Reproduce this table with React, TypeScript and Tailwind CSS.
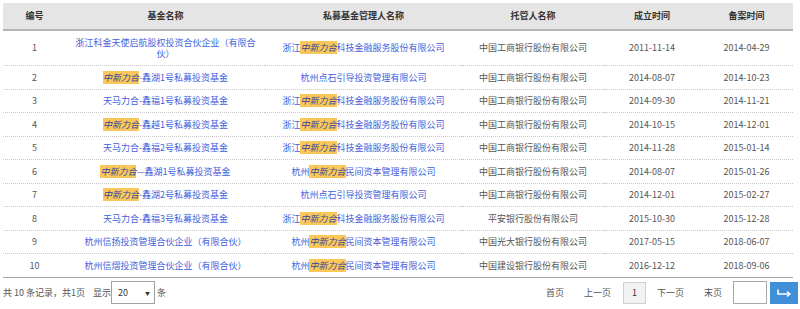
import React from "react";

type Part = string | { hl: string };

type Row = {
  no: number;
  fund: Part[];
  manager: Part[];
  custodian: string;
  founded: string;
  filed: string;
};

const HL = { hl: "中新力合" };

const ROWS: Row[] = [
  { no: 1, fund: ["浙江科金天使启航股权投资合伙企业（有限合伙）"], manager: ["浙江", HL, "科技金融服务股份有限公司"], custodian: "中国工商银行股份有限公司", founded: "2011-11-14", filed: "2014-04-29" },
  { no: 2, fund: [HL, "-鑫湖1号私募投资基金"], manager: ["杭州点石引导投资管理有限公司"], custodian: "中国工商银行股份有限公司", founded: "2014-08-07", filed: "2014-10-23" },
  { no: 3, fund: ["天马力合-鑫福1号私募投资基金"], manager: ["浙江", HL, "科技金融服务股份有限公司"], custodian: "中国工商银行股份有限公司", founded: "2014-09-30", filed: "2014-11-21" },
  { no: 4, fund: [HL, "-鑫越1号私募投资基金"], manager: ["浙江", HL, "科技金融服务股份有限公司"], custodian: "中国工商银行股份有限公司", founded: "2014-10-15", filed: "2014-12-01" },
  { no: 5, fund: ["天马力合-鑫福2号私募投资基金"], manager: ["浙江", HL, "科技金融服务股份有限公司"], custodian: "中国工商银行股份有限公司", founded: "2014-11-28", filed: "2015-01-14" },
  { no: 6, fund: [HL, "—鑫湖1号私募投资基金"], manager: ["杭州", HL, "民间资本管理有限公司"], custodian: "中国工商银行股份有限公司", founded: "2014-08-07", filed: "2015-01-26" },
  { no: 7, fund: [HL, "-鑫湖2号私募投资基金"], manager: ["杭州点石引导投资管理有限公司"], custodian: "中国工商银行股份有限公司", founded: "2014-12-01", filed: "2015-02-27" },
  { no: 8, fund: ["天马力合-鑫福3号私募投资基金"], manager: ["浙江", HL, "科技金融服务股份有限公司"], custodian: "平安银行股份有限公司", founded: "2015-10-30", filed: "2015-12-28" },
  { no: 9, fund: ["杭州信扬投资管理合伙企业（有限合伙）"], manager: ["杭州", HL, "民间资本管理有限公司"], custodian: "中国光大银行股份有限公司", founded: "2017-05-15", filed: "2018-06-07" },
  { no: 10, fund: ["杭州信熠投资管理合伙企业（有限合伙）"], manager: ["杭州", HL, "民间资本管理有限公司"], custodian: "中国建设银行股份有限公司", founded: "2016-12-12", filed: "2018-09-06" },
];

const HEADERS = ["编号", "基金名称", "私募基金管理人名称", "托管人名称", "成立时间", "备案时间"];

function Linked({ parts }: { parts: Part[] }) {
  return (
    <span className="text-[#3f5fdc]">
      {parts.map((p, i) =>
        typeof p === "string" ? (
          <span key={i}>{p}</span>
        ) : (
          <em key={i} className="bg-[#fac858] italic text-[#33449e]">
            {p.hl}
          </em>
        )
      )}
    </span>
  );
}

export default function App() {
  return (
    <div
      className="w-[800px] bg-white pt-[3px] text-[9px] text-[#555]"
      style={{ fontFamily: '"Noto Sans CJK SC", "Liberation Sans", sans-serif' }}
    >
      <table className="ml-[3px] w-[790px] table-fixed border-collapse">
        <colgroup>
          <col className="w-[63px]" />
          <col className="w-[199px]" />
          <col className="w-[197px]" />
          <col className="w-[142px]" />
          <col className="w-[96px]" />
          <col className="w-[93px]" />
        </colgroup>
        <thead>
          <tr className="h-[27px] border-b-2 border-[#b4b4b4] bg-[#e5e5e5]">
            {HEADERS.map((h) => (
              <th key={h} className="p-0 text-center font-bold text-[#333]">
                {h}
              </th>
            ))}
          </tr>
        </thead>
        <tbody>
          {ROWS.map((r, i) => (
            <tr
              key={r.no}
              className={
                i === ROWS.length - 1
                  ? "border-b border-solid border-[#a8a8a8]"
                  : "border-b border-dotted border-[#c8c8c8]"
              }
            >
              <td className="px-[8px] py-[5.5px] text-center leading-[11.5px]">{r.no}</td>
              <td className="px-[8px] py-[5.5px] text-center leading-[11.5px]">
                <Linked parts={r.fund} />
              </td>
              <td className="px-[6px] py-[5.5px] text-center leading-[11.5px]">
                <Linked parts={r.manager} />
              </td>
              <td className="px-[4px] py-[5.5px] text-center leading-[11.5px]">{r.custodian}</td>
              <td className="px-[4px] py-[5.5px] text-center leading-[11.5px]">{r.founded}</td>
              <td className="px-[4px] py-[5.5px] text-center leading-[11.5px]">{r.filed}</td>
            </tr>
          ))}
        </tbody>
      </table>

      <div className="flex h-[30px] items-center justify-between pl-[3px] pr-[2px]">
        <div className="flex items-center">
          <span>共 10 条记录，共1页</span>
          <span className="ml-[8px]">显示</span>
          <div className="flex h-[23px] w-[44px] items-center justify-between border border-[#a0a0a0] bg-white pl-[6px] pr-[4px] text-[#333]">
            <span>20</span>
            <span className="text-[5px]">▼</span>
          </div>
          <span className="ml-[2px]">条</span>
        </div>

        <div className="flex items-center">
          <span>首页</span>
          <span className="ml-[20px]">上一页</span>
          <span className="ml-[12px] flex h-[22px] w-[23px] items-center justify-center border border-[#d0d0d0] bg-[#f2f2f2] text-[#333]">
            1
          </span>
          <span className="ml-[11px]">下一页</span>
          <span className="ml-[20px]">末页</span>
          <div className="ml-[11px] h-[23px] w-[34px] border border-[#a8a8a8] bg-white" />
          <button
            type="button"
            className="ml-[3px] flex h-[22px] w-[28px] items-center justify-center bg-[#3f8fd9]"
          >
            <svg width="16" height="10" viewBox="0 0 16 10" fill="none">
              <path d="M2 1.5V6H13" stroke="white" strokeWidth="1.6" />
              <path d="M11 3.5L14 6L11 8.5" stroke="white" strokeWidth="1.4" fill="none" />
            </svg>
          </button>
        </div>
      </div>
    </div>
  );
}
